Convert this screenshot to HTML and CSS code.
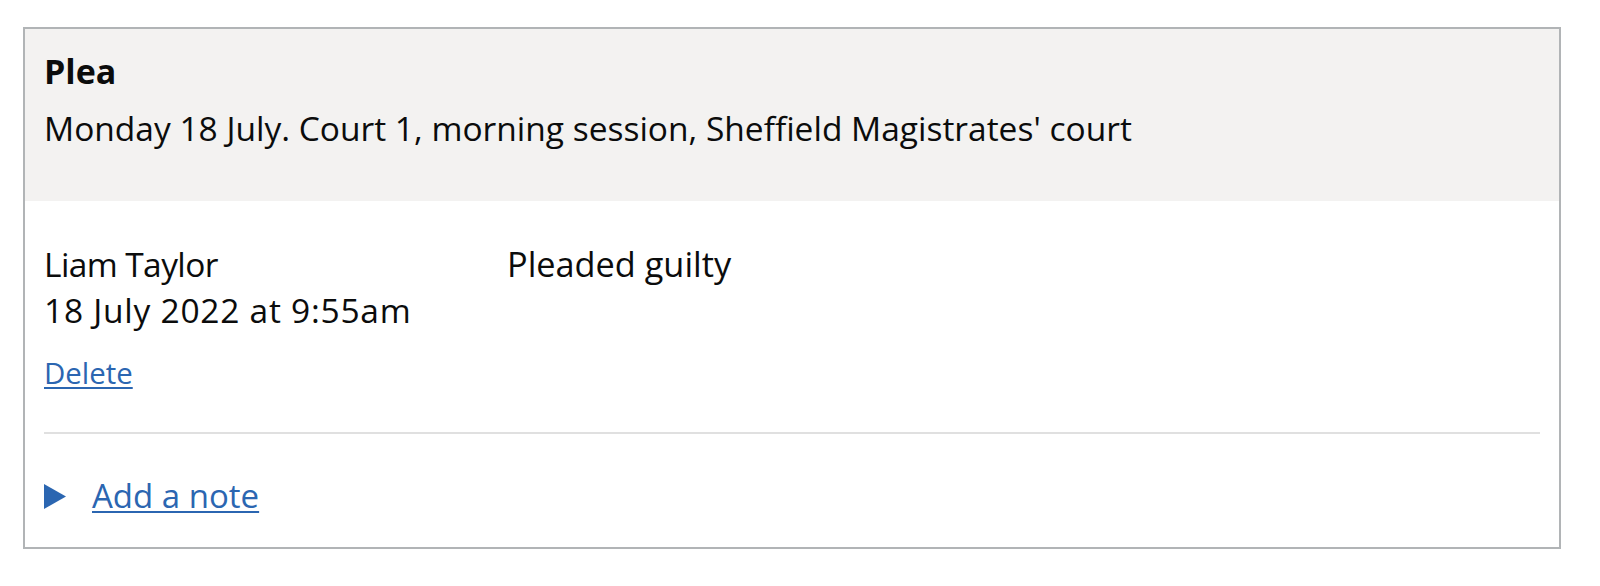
FILE: index.html
```html
<!DOCTYPE html>
<html lang="en">
<head>
<meta charset="utf-8">
<title>Plea</title>
<link rel="stylesheet" href="styles.css">
</head>
<body>
<div class="card">
  <div class="card-header">
    <h2 class="card-title">Plea</h2>
    <p class="card-desc">Monday 18 July. Court 1, morning session, Sheffield Magistrates' court</p>
  </div>
  <div class="card-body">
    <div class="entry">
      <div class="entry-meta">
        <div class="line line-name">Liam Taylor</div>
        <div class="line line-date">18 July 2022 at 9:55am</div>
        <a class="delete-link" href="#">Delete</a>
      </div>
      <div class="entry-value">
        <div class="line line-value">Pleaded guilty</div>
      </div>
    </div>
    <hr class="divider">
    <div class="details">
      <svg class="details-arrow" width="22" height="25" viewBox="0 0 22 25" aria-hidden="true"><polygon points="0,0 22,12.5 0,25" fill="#2b66b1"/></svg>
      <a class="details-link" href="#">Add a note</a>
    </div>
  </div>
</div>
</body>
</html>
```

FILE: styles.css
```css
html, body {
  margin: 0;
  padding: 0;
  background: #ffffff;
}

body {
  font-family: "Open Sans", "Liberation Sans", Arial, sans-serif;
  color: #0b0c0c;
  padding: 27px 0 0 23px;
}

.card {
  box-sizing: border-box;
  width: 1538px;
  height: 522px;
  border: 2px solid #b1b4b6;
  background: #ffffff;
  display: flex;
  flex-direction: column;
}

.card-header {
  background: #f3f2f1;
  padding: 20px 19px 0 19px;
  height: 172px;
  box-sizing: border-box;
}

.card-title {
  margin: 0;
  font-size: 34px;
  line-height: 44px;
  font-weight: 700;
}

.card-desc {
  margin: 13px 0 0 0;
  font-size: 33.5px;
  line-height: 44px;
  font-weight: 400;
}

.card-body {
  padding: 40px 19px 0 19px;
}

.entry {
  display: grid;
  grid-template-columns: 463px 1fr;
}

.line {
  font-size: 33.5px;
  line-height: 46px;
}

.line-name {
  letter-spacing: -0.6px;
}

.line-date {
  letter-spacing: 0.75px;
}

.line-value {
  font-size: 34.3px;
}

.delete-link {
  display: block;
  width: fit-content;
  margin-top: 22px;
  font-size: 29.4px;
  line-height: 36px;
  color: #2b66b1;
  text-decoration: underline;
  text-decoration-thickness: 2px;
  text-underline-offset: 3px;
}

.divider {
  border: 0;
  height: 2px;
  background: #e0e0e0;
  margin: 41px 0 0 0;
}

.details {
  display: flex;
  align-items: center;
  margin-top: 39px;
}

.details-arrow {
  flex: none;
  margin-right: 26px;
}

.details-link {
  font-size: 33px;
  line-height: 46px;
  color: #2b66b1;
  text-decoration: underline;
  text-decoration-thickness: 2px;
  text-underline-offset: 3px;
}
```
